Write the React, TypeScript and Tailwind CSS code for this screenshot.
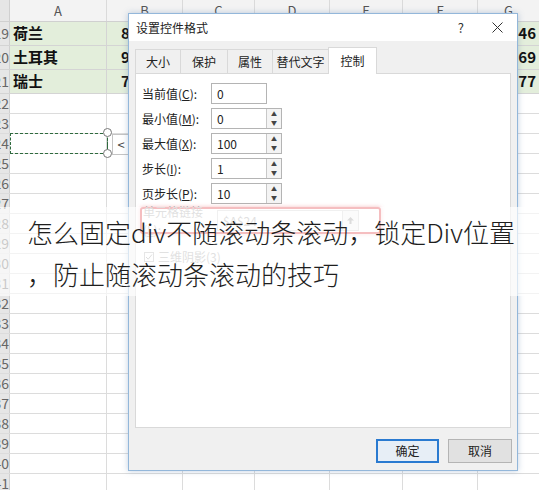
import React from "react"

// Sheet rows: 3 highlighted data rows, then empty rows
const dataRows = [
  { n: 19, name: "荷兰", b: "85.3", g: "84.46" },
  { n: 20, name: "土耳其", b: "92.1", g: "90.69" },
  { n: 21, name: "瑞士", b: "76.8", g: "75.77" },
]
const emptyRows = Array.from({ length: 20 }, (_, i) => 22 + i)

const gridCols = "grid grid-cols-[10px_97px_76px_72px_75px_73px_75px_62px]"

function Spinner() {
  return (
    <div className="flex w-[15px] flex-col border-l border-[#c8c8c8] bg-[#f4f4f4]">
      <div className="flex h-1/2 items-center justify-center text-[6px] leading-none text-[#444]">▲</div>
      <div className="flex h-1/2 items-center justify-center text-[6px] leading-none text-[#444]">▼</div>
    </div>
  )
}

function Field({
  label,
  hot,
  value,
  spin = true,
}: {
  label: string
  hot: string
  value: string
  spin?: boolean
}) {
  const [pre, post] = label.split("#")
  return (
    <div className="flex h-[21px] items-center">
      <div className="w-[75px] pl-[6px] text-[12px] text-[#222]">
        {pre}
        <span className="underline">{hot}</span>
        {post}
      </div>
      <div className={`flex h-[21px] border border-[#b4b4b4] bg-white ${spin ? "w-[71px]" : "w-[56px]"}`}>
        <div className="flex flex-1 items-center pl-[5px] text-[12px] text-[#222]">{value}</div>
        {spin && <Spinner />}
      </div>
    </div>
  )
}

function Dialog() {
  const tabs = ["大小", "保护", "属性", "替代文字"]
  const tabW = ["w-[45px]", "w-[47px]", "w-[45px]", "w-[56px]"]
  return (
    <div className="absolute left-[128px] top-[13px] flex h-[458px] w-[390px] flex-col border border-[#93b7da] bg-[#f0f0f0] shadow-[0_0_6px_rgba(80,120,170,0.35)]">
      {/* title bar */}
      <div className="flex h-[27px] items-center bg-white pl-[7px] pr-[14px] text-[12px] text-[#222]">
        <span>设置控件格式</span>
        <span className="ml-auto mr-[28px] text-[13px] text-[#333]">?</span>
        <svg width="11" height="11" viewBox="0 0 11 11" className="text-[#333]">
          <path d="M0.5 0.5L10.5 10.5M10.5 0.5L0.5 10.5" stroke="currentColor" strokeWidth="1" />
        </svg>
      </div>

      {/* tabs */}
      <div className="flex h-[32px] items-end px-[6px]">
        {tabs.map((t, i) => (
          <div
            key={t}
            className={`flex h-[24px] items-center justify-center border-t border-l border-[#d9d9d9] bg-[#f0f0f0] pt-[1px] text-[12px] text-[#222] ${tabW[i]}`}
          >
            {t}
          </div>
        ))}
        <div className="relative z-10 mb-[-1px] flex h-[27px] w-[49px] items-center justify-center border-x border-t border-[#d9d9d9] bg-white text-[12px] text-[#222]">
          控制
        </div>
      </div>

      {/* panel */}
      <div className="mx-[6px] flex h-[355px] flex-col border border-[#d9d9d9] bg-white pt-[9px]">
        <div className="flex flex-col gap-[4px]">
          <Field label="当前值(#):" hot="C" value="0" spin={false} />
          <Field label="最小值(#):" hot="M" value="0" />
          <Field label="最大值(#):" hot="X" value="100" />
          <Field label="步长(#):" hot="I" value="1" />
          <Field label="页步长(#):" hot="P" value="10" />
        </div>

        {/* cell link, highlighted */}
        <div className="ml-[4px] mt-[3px] flex h-[27px] w-[241px] items-center rounded-[3px] border-2 border-[#e2444b] shadow-[0_0_4px_rgba(226,68,75,0.35)]">
          <div className="w-[75px] pl-[1px] text-[12px] text-[#a8a8a8]">
            单元格链接(<span className="underline">L</span>):
          </div>
          <div className="flex h-[21px] w-[142px] border border-[#d4d4d4] bg-white">
            <div className="flex flex-1 items-center pl-[5px] text-[12px] text-[#a8a8a8]">$A$24</div>
            <div className="flex w-[16px] items-center justify-center border-l border-[#d4d4d4] bg-[#f4f4f4]">
              <svg width="9" height="9" viewBox="0 0 9 9">
                <path d="M4.5 1L8 4.5H5.5V8H3.5V4.5H1Z" fill="#9a9a9a" />
              </svg>
            </div>
          </div>
        </div>

        <div className="mt-[14px] flex items-center gap-[4px] pl-[8px] text-[12px] text-[#a8a8a8]">
          <div className="flex h-[10px] w-[10px] items-center justify-center border border-[#b8b8b8]">
            <svg width="8" height="8" viewBox="0 0 8 8">
              <path d="M1 4L3.2 6.2L7 1.5" fill="none" stroke="#a0a0a0" strokeWidth="1" />
            </svg>
          </div>
          <span>三维阴影(3)</span>
        </div>
      </div>

      {/* footer */}
      <div className="flex justify-end gap-[9px] pr-[5px] pt-[11px]">
        <button className="flex h-[24px] w-[63px] items-center justify-center border-2 border-[#2a7ad0] bg-[#e7eef6] text-[12px] text-[#222]">
          确定
        </button>
        <button className="flex h-[24px] w-[64px] items-center justify-center border border-[#b4b4b4] bg-[#e1e1e1] text-[12px] text-[#222]">
          取消
        </button>
      </div>
    </div>
  )
}

export default function App() {
  return (
    <div className="relative h-[490px] w-[539px] overflow-hidden bg-white font-['Noto_Sans_CJK_SC','Noto_Sans',sans-serif]">
      {/* sheet */}
      <div className="flex flex-col">
        <div className={`${gridCols} h-[22px] border-b border-[#d0d0d0] bg-[#f3f3f3] text-[13px] text-[#555]`}>
          <div className="border-r border-[#d0d0d0] bg-[#e6e6e6]" />
          {["A", "B", "C", "D", "E", "F", "G"].map((c) => (
            <div key={c} className="flex items-center justify-center border-r border-[#dadada]">
              {c}
            </div>
          ))}
        </div>

        {dataRows.map((r) => (
          <div key={r.n} className={`${gridCols} h-[24px] border-b border-[#d4d4d4]`}>
            <div className="flex items-center justify-end overflow-hidden border-r border-[#d0d0d0] bg-[#e6e6e6] text-[14px] text-[#666]">
              <span className="shrink-0">{r.n}</span>
            </div>
            <div className="flex items-center border-r border-[#d4d4d4] bg-[#e3eedb] pl-[3px] text-[15px] font-bold text-[#111]">
              {r.name}
            </div>
            <div className="flex items-center border-r border-[#d4d4d4] bg-[#e3eedb] pl-[14px] text-[15px] font-bold text-[#111]">
              {r.b}
            </div>
            <div className="border-r border-[#d4d4d4] bg-[#e3eedb]" />
            <div className="border-r border-[#d4d4d4] bg-[#e3eedb]" />
            <div className="border-r border-[#d4d4d4] bg-[#e3eedb]" />
            <div className="border-r border-[#d4d4d4] bg-[#e3eedb]" />
            <div className="flex items-center justify-end bg-[#e3eedb] pr-[4px] text-[15px] font-bold text-[#111]">
              {r.g}
            </div>
          </div>
        ))}

        {emptyRows.map((n) => (
          <div key={n} className={`${gridCols} h-[20px] border-b border-[#dcdcdc]`}>
            <div className="flex items-center justify-end overflow-hidden border-r border-[#d0d0d0] bg-[#e6e6e6] text-[14px] text-[#666]">
              <span className="shrink-0">{n}</span>
            </div>
            {[0, 1, 2, 3, 4, 5, 6].map((c) => (
              <div key={c} className="border-r border-[#dcdcdc]" />
            ))}
          </div>
        ))}
      </div>

      {/* selected scrollbar control on the sheet */}
      <div className="absolute left-[10px] top-[133px] h-[21px] w-[98px] border-[1.5px] border-dashed border-[#2f6a3e]" />
      <div className="absolute left-[107px] top-[133px] h-[20px] border-l-[1.5px] border-dashed border-[#2f6a3e]" />
      <div className="absolute left-[103px] top-[128px] h-[9px] w-[9px] rounded-full border border-[#777] bg-white" />
      <div className="absolute left-[103px] top-[149px] h-[9px] w-[9px] rounded-full border border-[#777] bg-white" />
      <div className="absolute left-[112px] top-[134px] flex h-[21px] w-[18px] items-center justify-center border border-[#c4c4c4] bg-white text-[13px] text-[#444]">
        &lt;
      </div>

      <Dialog />

      {/* caption banner */}
      <div className="absolute left-0 right-0 top-[207px] h-[89px] bg-white/65 pl-[27px] pt-[4px] text-[26px] font-light leading-[42px] text-[#1e1e1e]">
        怎么固定div不随滚动条滚动，锁定Div位置
        <br />
        ，防止随滚动条滚动的技巧
      </div>
    </div>
  )
}
